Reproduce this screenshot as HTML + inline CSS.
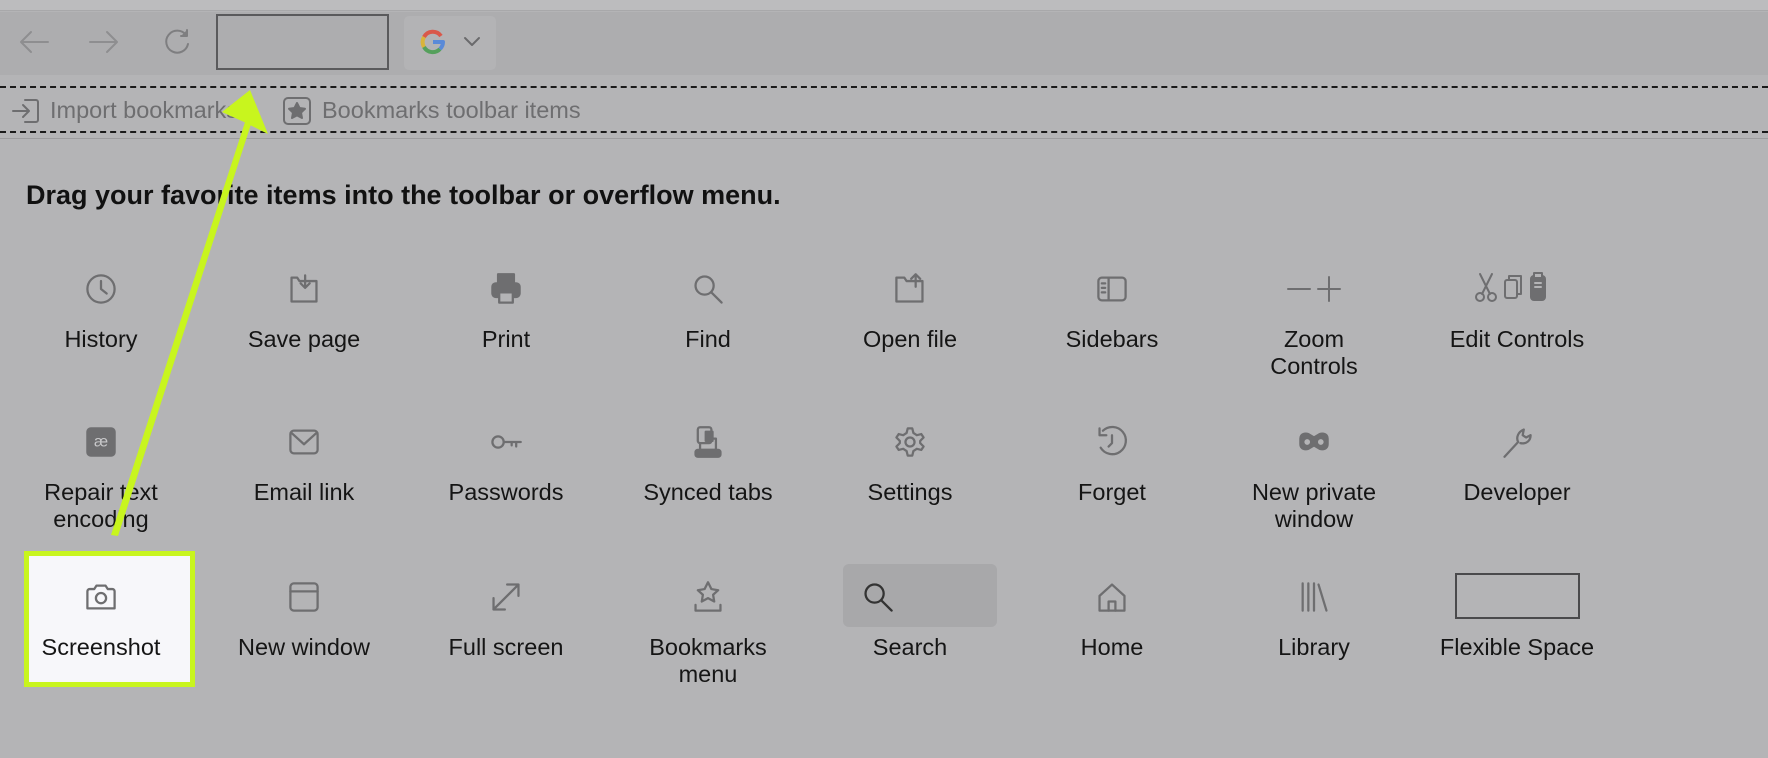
<!DOCTYPE html>
<html><head><meta charset="utf-8"><style>
*{margin:0;padding:0;box-sizing:border-box}
body{width:1768px;height:758px;background:#b4b4b6;font-family:"Liberation Sans",sans-serif;position:relative;overflow:hidden}
.a{position:absolute}
.item{position:absolute;width:200px;text-align:center;font-size:23.5px;line-height:27px;color:#151515}
.item svg{position:absolute;left:83px;top:-2px;width:34px;height:34px}
.item span{position:absolute;left:-10px;width:220px}
svg{fill:none;stroke:#6e6e70;stroke-width:2;stroke-linecap:round;stroke-linejoin:round}
</style></head><body>
<div class="a" style="left:0;top:0;width:1768px;height:11px;background:#bcbcbe;border-bottom:1px solid #a8a8aa"></div>
<div class="a" style="left:0;top:12px;width:1768px;height:63px;background:#adadaf"></div>
<svg class="a" style="left:18px;top:28px;width:32px;height:28px;stroke:#8e8e90"><path d="M30 14H3M13 4L3 14l10 10"/></svg>
<svg class="a" style="left:88px;top:28px;width:32px;height:28px;stroke:#8e8e90"><path d="M2 14h27M19 4l10 10-10 10"/></svg>
<svg class="a" style="left:162px;top:27px;width:30px;height:30px;stroke:#7e7e80"><path d="M24 8A11 11 0 1 0 26 17"/><path d="M25 3v6h-6" fill="#7e7e80"/></svg>
<div class="a" style="left:216px;top:14px;width:173px;height:56px;border:2px solid #5a5a5c"></div>
<div class="a" style="left:404px;top:16px;width:92px;height:54px;background:#b3b3b5;border-radius:5px"></div>
<svg class="a" style="left:420px;top:29px;width:26px;height:26px;stroke-width:4;stroke-linecap:butt"><path d="M21 7A10 10 0 0 0 4 8" stroke="#d9584a"/><path d="M4 8A10 10 0 0 0 4 18" stroke="#d9b43a"/><path d="M4 18A10 10 0 0 0 20 20" stroke="#55a05c"/><path d="M20 20A10 10 0 0 0 23 13H13" stroke="#5a8ad8"/></svg>
<svg class="a" style="left:463px;top:36px;width:18px;height:12px;stroke:#6a6a6c"><path d="M2 2l7 7 7-7"/></svg>
<div class="a" style="left:0;top:86px;width:1768px;border-top:2px dashed #1a1a1a"></div>
<div class="a" style="left:0;top:131px;width:1768px;border-top:2px dashed #1a1a1a"></div>
<div class="a" style="left:0;top:138px;width:1768px;border-top:1px solid #9c9c9e"></div>
<svg class="a" style="left:11px;top:97px;width:30px;height:28px"><path d="M14 3h11a2 2 0 0 1 2 2v18a2 2 0 0 1-2 2H14M2 14h16M12 8l6 6-6 6"/></svg>
<div class="a" style="left:50px;top:97px;font-size:23.5px;color:#6e6e70">Import bookmarks</div>
<svg class="a" style="left:282px;top:96px;width:30px;height:30px"><rect x="2" y="2" width="26" height="26" rx="4"/><path d="M15 7l2.5 5 5.5.8-4 3.8 1 5.4-5-2.6-5 2.6 1-5.4-4-3.8 5.5-.8z" fill="#6e6e70"/></svg>
<div class="a" style="left:322px;top:97px;font-size:23.5px;color:#6e6e70">Bookmarks toolbar items</div>
<div class="a" style="left:26px;top:180px;font-size:27px;font-weight:bold;color:#111">Drag your favorite items into the toolbar or overflow menu.</div>

<div class="a" style="left:24px;top:551px;width:171px;height:136px;background:#f7f7fa;border:5px solid #c8f51e"></div>
<div class="a" style="left:843px;top:564px;width:154px;height:63px;background:#a8a8aa;border-radius:6px"></div>
<div class="a" style="left:1455px;top:573px;width:125px;height:46px;border:2px solid #4a4a4c"></div>

<!-- row1 -->
<div class="item" style="left:1px;top:274px"><svg viewBox="0 0 30 30"><circle cx="15" cy="15" r="12"/><path d="M15 8v7l5 4"/></svg><span style="top:52px">History</span></div>
<div class="item" style="left:204px;top:274px"><svg viewBox="0 0 30 30"><path d="M4 5h5l2 3h15v18H4z"/><path d="M16 3v11M12 10l4 4 4-4"/></svg><span style="top:52px">Save page</span></div>
<div class="item" style="left:406px;top:274px"><svg viewBox="0 0 30 30"><rect x="8" y="2" width="14" height="8" fill="#6e6e70"/><rect x="3" y="10" width="24" height="12" rx="3" fill="#6e6e70"/><rect x="9" y="18" width="12" height="9" fill="#b4b4b6"/></svg><span style="top:52px">Print</span></div>
<div class="item" style="left:608px;top:274px"><svg viewBox="0 0 30 30"><circle cx="12" cy="12" r="8"/><path d="M18 18l9 9"/></svg><span style="top:52px">Find</span></div>
<div class="item" style="left:810px;top:274px"><svg viewBox="0 0 30 30"><path d="M3 5h7l2 3h14v18H3z"/><path d="M20 13V2M16 6l4-4 4 4"/></svg><span style="top:52px">Open file</span></div>
<div class="item" style="left:1012px;top:274px"><svg viewBox="0 0 30 30"><rect x="3" y="5" width="24" height="20" rx="3"/><path d="M12 5v20M6 10h3M6 14h3M6 18h3"/></svg><span style="top:52px">Sidebars</span></div>
<div class="item" style="left:1214px;top:274px"><svg style="left:70px;width:60px" viewBox="0 0 60 34"><path d="M4 17h22M34 17h22M45 5v24"/></svg><span style="top:52px">Zoom<br>Controls</span></div>
<div class="item" style="left:1417px;top:274px"><svg style="left:55px;width:90px;height:34px;top:-4px" viewBox="0 0 90 34"><circle cx="8" cy="27" r="4"/><circle cx="20" cy="27" r="4"/><path d="M10 24L20 4M18 24L8 4"/><rect x="33" y="10" width="12" height="18" rx="2"/><path d="M37 10V6h12v18h-4"/><rect x="59" y="6" width="14" height="24" rx="3" fill="#6e6e70"/><rect x="62" y="3" width="8" height="5" fill="#b4b4b6"/><path d="M63 13h6M63 17h6" stroke="#b4b4b6"/></svg><span style="top:52px">Edit Controls</span></div>
<!-- row2 -->
<div class="item" style="left:1px;top:427px"><svg viewBox="0 0 30 30"><rect x="3" y="3" width="24" height="24" rx="3" fill="#6e6e70"/><text x="15" y="19" text-anchor="middle" font-size="14" fill="#c8c8ca" stroke="none" font-family="Liberation Sans">æ</text></svg><span style="top:52px">Repair text<br>encoding</span></div>
<div class="item" style="left:204px;top:427px"><svg viewBox="0 0 30 30"><rect x="3" y="5" width="24" height="20" rx="3"/><path d="M4 7l11 10 11-10"/></svg><span style="top:52px">Email link</span></div>
<div class="item" style="left:406px;top:427px"><svg viewBox="0 0 30 30"><circle cx="8" cy="15" r="5"/><path d="M13 15h15M24 15v4M20 15v3"/></svg><span style="top:52px">Passwords</span></div>
<div class="item" style="left:608px;top:427px"><svg viewBox="0 0 30 30"><rect x="6" y="2" width="12" height="14" rx="2"/><rect x="13" y="6" width="6" height="8" fill="#6e6e70"/><path d="M20 12h2v10H8v-6"/><rect x="4" y="22" width="22" height="6" rx="2" fill="#6e6e70"/></svg><span style="top:52px">Synced tabs</span></div>
<div class="item" style="left:810px;top:427px"><svg viewBox="0 0 30 30"><circle cx="15" cy="15" r="4"/><path d="M13 3h4l1 4 3 2 4-1 2 3-3 3v2l3 3-2 3-4-1-3 2-1 4h-4l-1-4-3-2-4 1-2-3 3-3v-2l-3-3 2-3 4 1 3-2z"/></svg><span style="top:52px">Settings</span></div>
<div class="item" style="left:1012px;top:427px"><svg viewBox="0 0 30 30"><path d="M7 5A12 12 0 1 1 5 20"/><path d="M4 3v6h6M15 9v7l-3 3"/></svg><span style="top:52px">Forget</span></div>
<div class="item" style="left:1214px;top:427px"><svg viewBox="0 0 30 30"><path d="M3 12c0-4 4-5 7-4l5 3 5-3c3-1 7 0 7 4v5c0 4-4 5-7 4l-5-3-5 3c-3 1-7 0-7-4z" fill="#6e6e70"/><circle cx="9" cy="15" r="2.5" fill="#b4b4b6" stroke="none"/><circle cx="21" cy="15" r="2.5" fill="#b4b4b6" stroke="none"/></svg><span style="top:52px">New private<br>window</span></div>
<div class="item" style="left:1417px;top:427px"><svg viewBox="0 0 30 30"><path d="M4 28l12-13M16 15c-2-4 0-9 5-11l-1 5 3 2 4-2c0 5-4 8-9 7"/></svg><span style="top:52px">Developer</span></div>
<!-- row3 -->
<div class="item" style="left:1px;top:582px"><svg viewBox="0 0 30 30"><path d="M3 10a2 2 0 0 1 2-2h4l2-3h8l2 3h4a2 2 0 0 1 2 2v15H3z"/><circle cx="15" cy="16" r="4.5"/></svg><span style="top:52px">Screenshot</span></div>
<div class="item" style="left:204px;top:582px"><svg viewBox="0 0 30 30"><rect x="3" y="3" width="24" height="24" rx="3"/><path d="M3 10h24"/></svg><span style="top:52px">New window</span></div>
<div class="item" style="left:406px;top:582px"><svg viewBox="0 0 30 30"><path d="M4 26L26 4M16 4h10v10M4 16v10h10"/></svg><span style="top:52px">Full screen</span></div>
<div class="item" style="left:608px;top:582px"><svg viewBox="0 0 30 30"><path d="M15 2l3 6 6 1-4.5 4 1 6-5.5-3-5.5 3 1-6L6 9l6-1z"/><path d="M4 22v5h22v-5"/></svg><span style="top:52px">Bookmarks<br>menu</span></div>
<div class="item" style="left:810px;top:582px"><svg style="left:51px;stroke:#333" viewBox="0 0 30 30"><circle cx="12" cy="12" r="8"/><path d="M18 18l9 9"/></svg><span style="top:52px">Search</span></div>
<div class="item" style="left:1012px;top:582px"><svg viewBox="0 0 30 30"><path d="M4 14L15 4l11 10v13H4z"/><path d="M12 27v-8h6v8"/></svg><span style="top:52px">Home</span></div>
<div class="item" style="left:1214px;top:582px"><svg viewBox="0 0 30 30"><path d="M5 3v24M10 3v24M15 3v24M19 4l7 23"/></svg><span style="top:52px">Library</span></div>
<div class="item" style="left:1417px;top:582px"><span style="top:52px">Flexible Space</span></div>

<svg class="a" style="left:0;top:0;width:1768px;height:758px;stroke:none">
<path d="M111 535L118 536L253 118L247 116Z" fill="#c8f51e"/>
<path d="M250 90L268 134L244 122L222 112Z" fill="#c8f51e"/>
</svg>
</body></html>
